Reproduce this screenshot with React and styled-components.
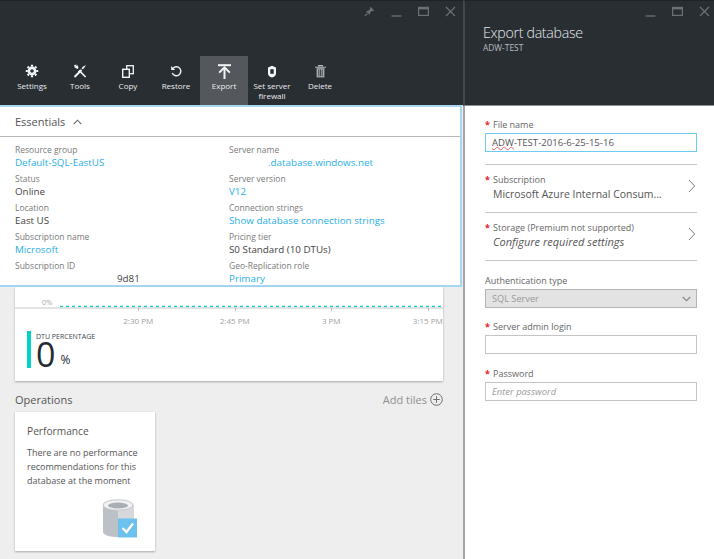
import React from "react";
import styled, { createGlobalStyle } from "styled-components";

const GlobalStyle = createGlobalStyle`
  html, body {
    margin: 0;
    padding: 0;
    width: 714px;
    height: 559px;
    overflow: hidden;
    background: #eeeeee;
    font-family: "Open Sans", "Liberation Sans", sans-serif;
  }
`;

const Page = styled.div`
  display: flex;
  width: 714px;
  height: 559px;
`;

const LeftBlade = styled.section`
  width: 463px;
  flex: none;
  display: flex;
  flex-direction: column;
  background: #eeeeee;
`;

const RightBlade = styled.section`
  flex: 1;
  display: flex;
  flex-direction: column;
  background: #ffffff;
`;

const Header = styled.header`
  height: 105px;
  flex: none;
  box-sizing: border-box;
  background: #292e33;
  border-top: 1px solid #1f2327;
  display: flex;
  flex-direction: column;
  position: relative;
`;

const RightHeader = styled(Header)`
  border-left: 2px solid #43474b;
  border-bottom: 1px solid #8c8f92;
  height: 106px;
  padding: 23px 0 0 18px;
`;

const WindowControls = styled.div`
  position: absolute;
  top: 5px;
  right: ${(p) => p.$right}px;
  display: flex;
  align-items: center;
  gap: 16px;
`;

const Toolbar = styled.div`
  margin-top: auto;
  display: flex;
  padding-left: 8px;
`;

const ToolButton = styled.div`
  width: 48px;
  height: 49px;
  box-sizing: border-box;
  padding-top: 6px;
  display: flex;
  flex-direction: column;
  align-items: center;
  background: ${(p) => (p.$active ? "#54575c" : "transparent")};
  color: #e9eaec;
  font-size: 8px;
  font-weight: 500;
  line-height: 10px;
  text-align: center;
  white-space: nowrap;
`;

const ToolIcon = styled.div`
  height: 18px;
  margin-bottom: 1px;
  display: flex;
  align-items: center;
  justify-content: center;
`;

const Essentials = styled.div`
  height: 182px;
  flex: none;
  box-sizing: border-box;
  background: #ffffff;
  border: 2px solid #a6d6f1;
  border-left-width: 0;
  margin-right: 1px;
  display: flex;
  flex-direction: column;
`;

const EssentialsHead = styled.div`
  height: 30px;
  flex: none;
  box-sizing: border-box;
  border-bottom: 1px solid #b9b9b9;
  display: flex;
  align-items: center;
  gap: 8px;
  padding-left: 15px;
  font-size: 11px;
  color: #555;
`;

const EssentialsGrid = styled.div`
  display: grid;
  grid-template-columns: 214px 1fr;
  grid-auto-flow: column;
  grid-template-rows: repeat(5, 29px);
  padding: 7px 0 0 15px;
`;

const Field = styled.div`
  display: flex;
  flex-direction: column;
`;

const FieldLabel = styled.div`
  font-size: 8.5px;
  line-height: 11px;
  color: #7a7a7a;
`;

const FieldValue = styled.div`
  font-size: 9.8px;
  line-height: 13px;
  margin-top: 1px;
  white-space: nowrap;
  padding-left: ${(p) => p.$indent || 0}px;
  color: ${(p) => (p.$link ? "#29aee6" : "#444")};
`;

const Content = styled.div`
  padding: 0 20px 0 15px;
  flex: 1;
  display: flex;
  flex-direction: column;
`;

const ChartCard = styled.div`
  height: 94px;
  flex: none;
  background: #ffffff;
  box-shadow: 0 1px 2px rgba(0, 0, 0, 0.3);
  display: flex;
  flex-direction: column;
`;

const PlotRow = styled.div`
  height: 18px;
  flex: none;
  position: relative;
`;

const PlotLabel = styled.span`
  position: absolute;
  left: 27px;
  bottom: -2px;
  font-size: 7.5px;
  line-height: 10px;
  color: #a8a8a8;
`;

const AxisLabels = styled.div`
  display: flex;
  padding-left: 75px;
  height: 14px;
  align-items: center;
  margin-top: 1px;
`;

const AxisLabel = styled.span`
  width: 96.5px;
  flex: none;
  text-align: center;
  font-size: 8px;
  color: #a0a0a0;
  white-space: nowrap;
`;

const Metric = styled.div`
  display: flex;
  margin: 4px 0 0 12px;
  height: 37px;
  gap: 5px;
`;

const MetricBar = styled.div`
  width: 4px;
  background: #00d2c6;
`;

const MetricText = styled.div`
  display: flex;
  flex-direction: column;
`;

const MetricName = styled.div`
  font-size: 7px;
  line-height: 9px;
  margin-top: 1px;
  color: #3c4650;
  white-space: nowrap;
`;

const MetricValue = styled.div`
  font-size: 34px;
  line-height: 26px;
  color: #252b33;
  display: flex;
  align-items: flex-end;
  gap: 5px;
`;

const MetricUnit = styled.span`
  font-size: 12px;
  line-height: 14px;
`;

const SectionHead = styled.div`
  display: flex;
  align-items: center;
  justify-content: space-between;
  height: 18px;
  margin-top: 9px;
  margin-bottom: 4px;
`;

const SectionTitle = styled.span`
  font-size: 11px;
  color: #555;
`;

const AddTiles = styled.span`
  display: flex;
  align-items: center;
  gap: 3px;
  font-size: 11px;
  color: #8f8f8f;
`;

const Tile = styled.div`
  width: 140px;
  height: 139px;
  box-sizing: border-box;
  background: #ffffff;
  box-shadow: 0 1px 2px rgba(0, 0, 0, 0.3);
  padding: 11px 12px 0;
  display: flex;
  flex-direction: column;
`;

const TileTitle = styled.div`
  font-size: 10.2px;
  line-height: 16px;
  color: #555;
  margin-bottom: 7px;
`;

const TileText = styled.div`
  font-size: 9px;
  line-height: 14px;
  color: #555;
  white-space: nowrap;
`;

const TileIcon = styled.div`
  margin-top: 11px;
  align-self: flex-end;
  margin-right: 6px;
  display: flex;
`;

const BladeTitle = styled.div`
  font-size: 14.2px;
  letter-spacing: -0.3px;
  line-height: 18px;
  color: #e6e9eb;
  font-weight: 300;
`;

const BladeSub = styled.div`
  font-size: 8.4px;
  line-height: 11px;
  color: #b8bcc0;
`;

const Form = styled.div`
  flex: 1;
  border-left: 2px solid #a3a5a7;
  padding: 12px 17px 0 20px;
  display: flex;
  flex-direction: column;
`;

const Label = styled.div`
  display: flex;
  font-size: 9px;
  line-height: 13px;
  color: #666;
  white-space: nowrap;
`;

const Star = styled.span`
  width: 8px;
  flex: none;
  color: #e8202a;
  font-weight: 700;
`;

const FileInput = styled.div`
  height: 19px;
  box-sizing: border-box;
  margin-top: 2px;
  border: 1px solid #6fcbef;
  padding-left: 6px;
  font-size: 9.6px;
  line-height: 17px;
  color: #555;
  white-space: nowrap;
`;

const Typo = styled.span`
  text-decoration: underline wavy #e0606a 0.6px;
  text-underline-offset: 0;
`;

const Divider = styled.div`
  height: 1px;
  flex: none;
  background: #c6c6c6;
`;

const PickerRow = styled.div`
  height: 47px;
  box-sizing: border-box;
  padding-top: 8px;
  display: flex;
  align-items: flex-start;
  justify-content: space-between;
`;

const PickerText = styled.div`
  display: flex;
  flex-direction: column;
`;

const PickerValue = styled.div`
  font-size: ${(p) => (p.$italic ? "11px" : "10.45px")};
  line-height: 16px;
  margin-left: 8px;
  color: #555;
  white-space: nowrap;
  font-style: ${(p) => (p.$italic ? "italic" : "normal")};
`;

const PickerChevron = styled.div`
  display: flex;
  margin: 6px 1px 0 0;
`;

const SelectBox = styled.div`
  height: 19px;
  box-sizing: border-box;
  margin-top: 2px;
  background: #e3e3e3;
  border: 1px solid #b5b5b5;
  display: flex;
  align-items: center;
  justify-content: space-between;
  padding: 0 5px 0 6px;
  font-size: 9.2px;
  color: #9a9a9a;
`;

const TextInput = styled.input`
  display: block;
  width: 100%;
  height: 19px;
  box-sizing: border-box;
  margin: 2px 0 0;
  background: #ffffff;
  border: 1px solid #c4c4c4;
  padding: 0 6px;
  font-family: inherit;
  font-size: 9.4px;
  outline: none;

  &::placeholder {
    color: #9a9a9a;
    font-style: italic;
    opacity: 1;
  }
`;

const Spacer = styled.div`
  height: ${(p) => p.$h}px;
  flex: none;
`;

const Glyph = ({ children, w = 14, h = 14, vb }) => (
  <svg width={w} height={h} viewBox={vb || `0 0 ${w} ${h}`} fill="none">
    {children}
  </svg>
);

const ctl = "#6d7176";

const PinIcon = () => (
  <Glyph w={11} h={11}>
    <path d="M6.5 .8 10.2 4.5 9.2 5 8 4.8 5.8 7 5.6 9 1.9 5.3 4 5.1 6.2 3 6 1.8Z" fill={ctl} />
    <path d="M3.4 7.5 .8 10.2" stroke={ctl} strokeWidth="1.1" />
  </Glyph>
);

const MinIcon = () => (
  <Glyph w={11} h={11}>
    <path d="M.5 10h10" stroke={ctl} strokeWidth="1.3" />
  </Glyph>
);

const MaxIcon = () => (
  <Glyph w={11} h={11}>
    <rect x=".6" y="1.4" width="9.8" height="8" stroke={ctl} strokeWidth="1.2" />
    <path d="M.6 2.6h9.8" stroke={ctl} strokeWidth="1.6" />
  </Glyph>
);

const CloseIcon = () => (
  <Glyph w={11} h={11}>
    <path d="M1 1l9 9M10 1l-9 9" stroke={ctl} strokeWidth="1.2" />
  </Glyph>
);

const GearIcon = () => (
  <Glyph w={14} h={14}>
    <path
      d="M7 3.9a3.1 3.1 0 1 0 0 6.2 3.1 3.1 0 0 0 0-6.2Z"
      stroke="#f4f5f6"
      strokeWidth="2.6"
    />
    <path
      d="M7 .8v2M7 11.2v2M.8 7h2M11.2 7h2M2.6 2.6 4 4M10 10l1.4 1.4M11.4 2.6 10 4M4 10l-1.4 1.4"
      stroke="#f4f5f6"
      strokeWidth="2.2"
    />
  </Glyph>
);

const ToolsIcon = () => (
  <Glyph w={14} h={14}>
    <path d="M1.5 13 8.5 6" stroke="#f4f5f6" strokeWidth="2" />
    <path d="M5 4.2A2.6 2.6 0 0 1 1.2 1.9L3 3.2 4.2 2 2.9.6A2.6 2.6 0 0 1 5 4.2Z" fill="#f4f5f6" />
    <path d="M12.6 13 6.6 7 5.4 8.2M1.6 1 5 4.4" stroke="#f4f5f6" strokeWidth="1.6" />
    <path d="M13 1 9.4 3 8.4 5.6 10.8 4.6Z" fill="#f4f5f6" />
  </Glyph>
);

const CopyIcon = () => (
  <Glyph w={12} h={13}>
    <rect x="4.7" y=".7" width="6.6" height="8" stroke="#f4f5f6" strokeWidth="1.3" fill="#292e33" />
    <rect x=".7" y="4.3" width="6.6" height="8" stroke="#f4f5f6" strokeWidth="1.4" fill="#292e33" />
  </Glyph>
);

const RestoreIcon = () => (
  <Glyph w={13} h={13}>
    <path d="M3 3.2A4.5 4.5 0 1 1 2.2 8" stroke="#f4f5f6" strokeWidth="1.4" />
    <path d="M1.2 1v4h4Z" fill="#f4f5f6" />
  </Glyph>
);

const ExportIcon = () => (
  <Glyph w={13} h={15}>
    <path d="M0 1.2h13" stroke="#f4f5f6" strokeWidth="2" />
    <path d="M6.5 15V4" stroke="#f4f5f6" strokeWidth="2" />
    <path d="M1.2 8.6 6.5 3.4l5.3 5.2" stroke="#f4f5f6" strokeWidth="2" />
  </Glyph>
);

const ShieldIcon = () => (
  <Glyph w={10} h={13}>
    <path d="M5 .8 9 2.6V8.6C9 10.8 7 12.4 5 12.4S1 10.8 1 8.6V2.6Z" fill="#f4f5f6" />
    <rect x="3.3" y="4.2" width="3.4" height="4.6" fill="#292e33" />
  </Glyph>
);

const TrashIcon = () => (
  <Glyph w={11} h={13}>
    <path d="M0 2.2h11M3.6 1.4V.6h3.8v.8" stroke="#b6b8ba" strokeWidth="1.1" />
    <path d="M1.6 3.2h7.8v9.2H1.6Z" fill="#a9abad" />
    <path d="M3.8 4.4v6.8M5.5 4.4v6.8M7.2 4.4v6.8" stroke="#292e33" strokeWidth=".8" />
  </Glyph>
);

const ChevronUp = () => (
  <Glyph w={9} h={6}>
    <path d="M.7 5.2 4.5 1.2l3.8 4" stroke="#666" strokeWidth="1.1" />
  </Glyph>
);

const ChevronRight = () => (
  <Glyph w={8} h={14}>
    <path d="M1 1l5.6 6L1 13" stroke="#7d7d7d" strokeWidth="1" />
  </Glyph>
);

const ChevronDown = () => (
  <Glyph w={9} h={6}>
    <path d="M.8 1 4.5 4.6 8.2 1" stroke="#8a8a8a" strokeWidth="1.2" />
  </Glyph>
);

const PlusCircle = () => (
  <Glyph w={13} h={13}>
    <circle cx="6.5" cy="6.5" r="5.8" stroke="#6f6f6f" strokeWidth="1" />
    <path d="M6.5 3.2v6.6M3.2 6.5h6.6" stroke="#6f6f6f" strokeWidth="1" />
  </Glyph>
);

const DbIcon = () => (
  <Glyph w={35} h={40}>
    <path d="M1 6v27c0 3 7 5 15 5V6Z" fill="#bcc1c8" />
    <path d="M16 6h16v27H16Z" fill="#d6d8db" />
    <ellipse cx="16" cy="6" rx="15" ry="5.2" fill="#f2f2f2" stroke="#c4c7cb" strokeWidth="1" />
    <ellipse cx="16" cy="6.5" rx="10" ry="3" fill="#a9aeb4" />
    <rect x="16" y="19.5" width="19" height="19" fill="#6cc1ee" />
    <path d="M20.5 29 24.5 33 31 24.5" stroke="#ffffff" strokeWidth="2.4" />
  </Glyph>
);

const ChartLine = () => (
  <svg width="428" height="7" viewBox="0 0 428 7" fill="none" style={{ display: "block" }}>
    <path d="M45 1.5H428" stroke="#19cfc4" strokeWidth="1.4" strokeDasharray="3 3" />
    <path d="M0 3h428" stroke="#c8c8c8" strokeWidth="1" />
    <path d="M123.5 3v3M220.5 3v3M316.5 3v3M413.5 3v3" stroke="#c0c0c0" strokeWidth="1" />
  </svg>
);

const tools = [
  { label: "Settings", icon: <GearIcon /> },
  { label: "Tools", icon: <ToolsIcon /> },
  { label: "Copy", icon: <CopyIcon /> },
  { label: "Restore", icon: <RestoreIcon /> },
  { label: "Export", icon: <ExportIcon />, active: true },
  { label: "Set server firewall", icon: <ShieldIcon />, wrap: true },
  { label: "Delete", icon: <TrashIcon /> },
];

const fields = [
  { label: "Resource group", value: "Default-SQL-EastUS", link: true },
  { label: "Status", value: "Online" },
  { label: "Location", value: "East US" },
  { label: "Subscription name", value: "Microsoft", link: true },
  { label: "Subscription ID", value: "9d81", indent: 102 },
  { label: "Server name", value: ".database.windows.net", link: true, indent: 39 },
  { label: "Server version", value: "V12", link: true },
  { label: "Connection strings", value: "Show database connection strings", link: true },
  { label: "Pricing tier", value: "S0 Standard (10 DTUs)" },
  { label: "Geo-Replication role", value: "Primary", link: true },
];

const App = () => {
  return (
    <>
      <GlobalStyle />
      <Page>
        <LeftBlade>
          <Header>
            <WindowControls $right={7}>
              <PinIcon />
              <MinIcon />
              <MaxIcon />
              <CloseIcon />
            </WindowControls>
            <Toolbar>
              {tools.map((tool) => (
                <ToolButton key={tool.label} $active={tool.active}>
                  <ToolIcon>{tool.icon}</ToolIcon>
                  {tool.wrap ? (
                    <span>
                      Set server
                      <br />
                      firewall
                    </span>
                  ) : (
                    tool.label
                  )}
                </ToolButton>
              ))}
            </Toolbar>
          </Header>
          <Essentials>
            <EssentialsHead>
              Essentials
              <ChevronUp />
            </EssentialsHead>
            <EssentialsGrid>
              {fields.map((field) => (
                <Field key={field.label}>
                  <FieldLabel>{field.label}</FieldLabel>
                  <FieldValue $link={field.link} $indent={field.indent}>
                    {field.value}
                  </FieldValue>
                </Field>
              ))}
            </EssentialsGrid>
          </Essentials>
          <Content>
            <ChartCard>
              <PlotRow>
                <PlotLabel>0%</PlotLabel>
              </PlotRow>
              <ChartLine />
              <AxisLabels>
                <AxisLabel>2:30 PM</AxisLabel>
                <AxisLabel>2:45 PM</AxisLabel>
                <AxisLabel>3 PM</AxisLabel>
                <AxisLabel>3:15 PM</AxisLabel>
              </AxisLabels>
              <Metric>
                <MetricBar />
                <MetricText>
                  <MetricName>DTU PERCENTAGE</MetricName>
                  <MetricValue>
                    0<MetricUnit>%</MetricUnit>
                  </MetricValue>
                </MetricText>
              </Metric>
            </ChartCard>
            <SectionHead>
              <SectionTitle>Operations</SectionTitle>
              <AddTiles>
                Add tiles
                <PlusCircle />
              </AddTiles>
            </SectionHead>
            <Tile>
              <TileTitle>Performance</TileTitle>
              <TileText>
                There are no performance
                <br />
                recommendations for this
                <br />
                database at the moment
              </TileText>
              <TileIcon>
                <DbIcon />
              </TileIcon>
            </Tile>
          </Content>
        </LeftBlade>
        <RightBlade>
          <RightHeader>
            <WindowControls $right={4}>
              <MinIcon />
              <MaxIcon />
              <CloseIcon />
            </WindowControls>
            <BladeTitle>Export database</BladeTitle>
            <BladeSub>ADW-TEST</BladeSub>
          </RightHeader>
          <Form>
            <Label>
              <Star>*</Star>File name
            </Label>
            <FileInput>
              <Typo>ADW</Typo>-TEST-2016-6-25-15-16
            </FileInput>
            <Spacer $h={12} />
            <Divider />
            <PickerRow>
              <PickerText>
                <Label>
                  <Star>*</Star>Subscription
                </Label>
                <PickerValue>Microsoft Azure Internal Consum...</PickerValue>
              </PickerText>
              <PickerChevron>
                <ChevronRight />
              </PickerChevron>
            </PickerRow>
            <Divider />
            <PickerRow>
              <PickerText>
                <Label>
                  <Star>*</Star>Storage (Premium not supported)
                </Label>
                <PickerValue $italic>Configure required settings</PickerValue>
              </PickerText>
              <PickerChevron>
                <ChevronRight />
              </PickerChevron>
            </PickerRow>
            <Divider />
            <Spacer $h={13} />
            <Label>Authentication type</Label>
            <SelectBox>
              SQL Server
              <ChevronDown />
            </SelectBox>
            <Spacer $h={12} />
            <Label>
              <Star>*</Star>Server admin login
            </Label>
            <TextInput />
            <Spacer $h={13} />
            <Label>
              <Star>*</Star>Password
            </Label>
            <TextInput placeholder="Enter password" />
          </Form>
        </RightBlade>
      </Page>
    </>
  );
};

export default App;
